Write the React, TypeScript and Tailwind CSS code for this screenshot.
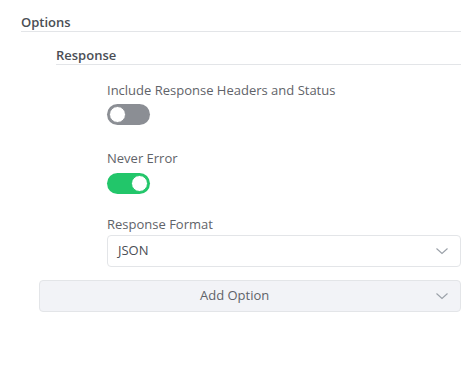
import React, { useState } from 'react';

const Chevron: React.FC = () => (
    <svg width="14" height="14" viewBox="0 0 14 14" fill="none" className="text-[#9aa0a8]">
        <path d="M1.5 4.5 L7 9.5 L12.5 4.5" stroke="currentColor" strokeWidth="1.1" />
    </svg>
);

const Toggle: React.FC<{ on: boolean; onChange: () => void }> = ({ on, onChange }) => (
    <button
        onClick={onChange}
        className={`flex items-center w-[43px] h-[21px] rounded-full p-[2px] ${on ? 'bg-[#22c66a] justify-end' : 'bg-[#8b8e94] justify-start'}`}
    >
        <span className={`block w-[17px] h-[17px] rounded-full bg-white border ${on ? 'border-[#22c66a]' : 'border-[#8b8e94]'}`} />
    </button>
);

export default function App() {
    const [headers, setHeaders] = useState(false);
    const [neverError, setNeverError] = useState(true);

    return (
        <div className="w-[474px] h-[389px] bg-white font-['Open_Sans',sans-serif] text-[13px] text-[#5f6369] pl-[21px] pr-[13px] pt-[15px]">
            <h2 className="font-semibold text-[#4a4e55] pb-[2px] border-b border-[#e3e5e8] leading-[14px]">Options</h2>

            <div className="pl-[35px] pt-[16px]">
                <h3 className="font-semibold text-[#4a4e55] pb-[2px] border-b border-[#e3e5e8] leading-[14px]">Response</h3>

                <div className="pl-[51px] pt-[16px] flex flex-col">
                    <label className="leading-[18px]">Include Response Headers and Status</label>
                    <div className="pt-[5px]">
                        <Toggle on={headers} onChange={() => setHeaders(!headers)} />
                    </div>

                    <label className="leading-[18px] pt-[24px]">Never Error</label>
                    <div className="pt-[6px]">
                        <Toggle on={neverError} onChange={() => setNeverError(!neverError)} />
                    </div>

                    <label className="leading-[18px] pt-[21px]">Response Format</label>
                    <div className="mt-[2px] h-[32px] flex items-center justify-between pl-[10px] pr-[11px] border border-[#e3e5e8] rounded-[4px] text-[#4a4e55]">
                        <span>JSON</span>
                        <Chevron />
                    </div>
                </div>
            </div>

            <div className="ml-[18px] mt-[13px] h-[32px] flex items-center justify-between pl-[160px] pr-[11px] border border-[#e3e5e8] rounded-[4px] bg-[#f2f3f7]">
                <span>Add Option</span>
                <Chevron />
            </div>
        </div>
    );
}
